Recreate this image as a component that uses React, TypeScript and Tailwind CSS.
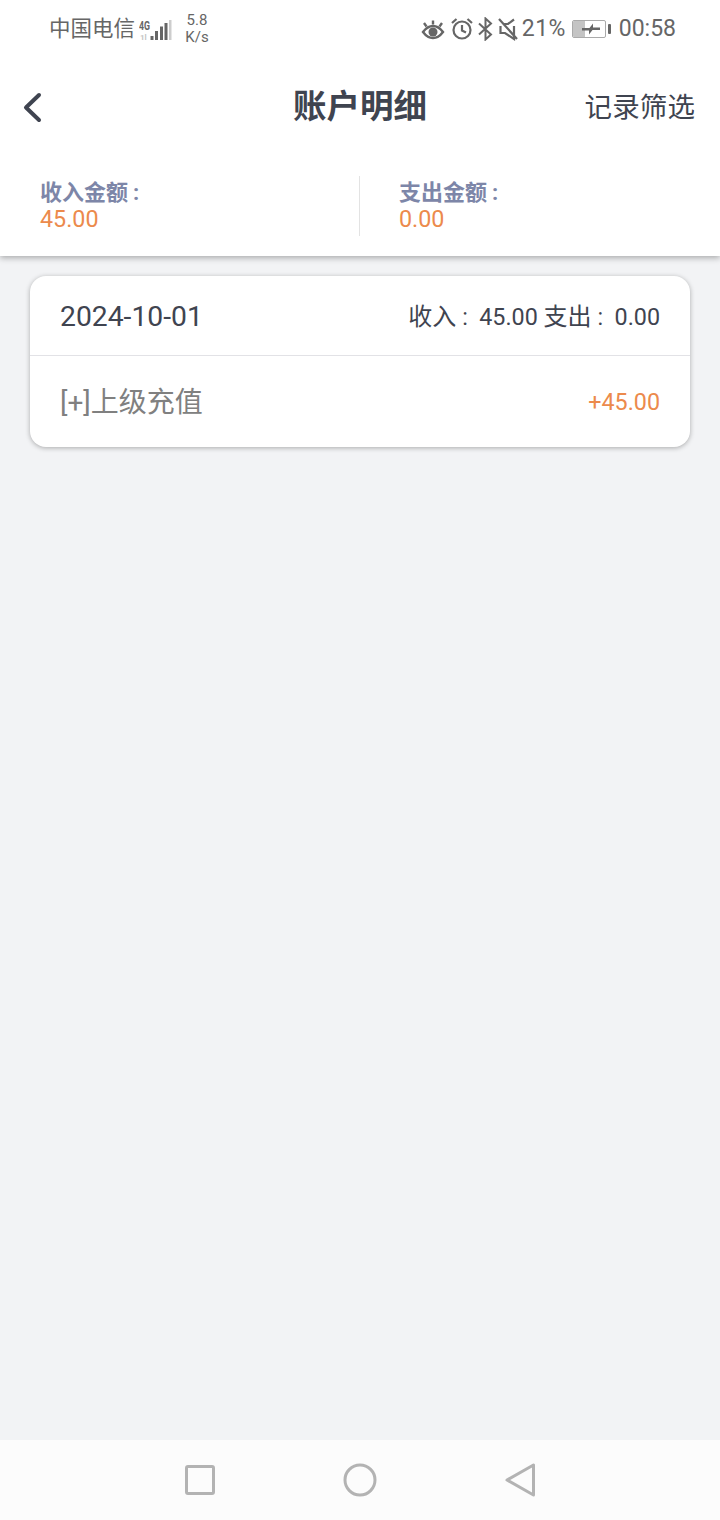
const font = "font-['Roboto','Noto_Sans_CJK_SC',sans-serif]";

function StatusBar() {
  return (
    <div className="h-[58px] flex items-center justify-between pl-[49px] pr-[44px] text-[#666666]">
      <div className="flex items-center">
        <span className="text-[21.500px] leading-[28px] w-[90px]">中国电信</span>
        <svg width="34" height="24" viewBox="0 0 34 24" className="mt-[3px]">
          <text x="0" y="11" fontSize="13" fontWeight="700" fill="#666" fontFamily="Roboto" textLength="11" lengthAdjust="spacingAndGlyphs">4G</text>
          <text x="1" y="21" fontSize="8" fontWeight="700" fill="#c4c4c4" fontFamily="Roboto">1l</text>
          <rect x="11.500" y="17" width="3" height="4" fill="#666" />
          <rect x="16" y="12" width="3" height="9" fill="#666" />
          <rect x="21" y="7.500" width="3" height="13.500" fill="#666" />
          <rect x="25.500" y="4" width="3" height="17" fill="#666" />
          <rect x="30" y="1" width="2.500" height="20" fill="#cdcdcd" />
        </svg>
        <div className="ml-[12px] w-[24px] flex flex-col items-center text-[15px] leading-[17px] mt-[-1px]">
          <span>5.8</span>
          <span>K/s</span>
        </div>
      </div>
      <div className="flex items-center">
        <svg width="24" height="24" viewBox="0 0 24 24" fill="none" stroke="#666" strokeWidth="2.400">
          <path d="M2 15c3-4 6.500-6 10-6s7 2 10 6c-3 4-6.500 6-10 6s-7-2-10-6z" />
          <circle cx="12" cy="15" r="4.500" fill="#666" stroke="none" />
          <path d="M3 6l2.500 3.500M12 3.500v4M21 6l-2.500 3.500" />
        </svg>
        <svg width="24" height="24" viewBox="0 0 24 24" fill="none" stroke="#666" strokeWidth="2.200" className="ml-[5px]">
          <circle cx="12" cy="13" r="8.500" />
          <path d="M12 8v5.500l4 2M2 6l4.500-4M22 6l-4.500-4" />
        </svg>
        <svg width="16" height="24" viewBox="0 0 16 24" fill="none" stroke="#666" strokeWidth="2" className="ml-[3px]">
          <path d="M2 6.500l12 11-5.500 5V1.500l5.500 5-12 11" />
        </svg>
        <svg width="22" height="24" viewBox="0 0 22 24" fill="none" stroke="#666" strokeWidth="2.200" className="ml-[4px]">
          <path d="M2 2l18 20M17 2.500L11 7H7M3.500 9v7h4.500l9 6V9" />
        </svg>
        <span className="text-[23px] leading-[28px] ml-[3px] tracking-[0.4px]">21%</span>
        <div className="ml-[6px] w-[34px] h-[18px] border border-[#aaaaaa] rounded-[2px] bg-white relative overflow-hidden">
          <div className="h-full w-[12px] bg-[#c4c4c4]"></div>
          <svg width="20" height="12" viewBox="0 0 20 12" className="absolute left-[9px] top-[2px]">
            <path d="M0 5h7.500l3.500-4.500v4h7v2.500h-7.500l-3.500 4.500V7.500H0z" fill="#666" />
          </svg>
        </div>
        <div className="ml-[2px] w-[3px] h-[10px] bg-[#666666] rounded-[1px]"></div>
        <span className="text-[23px] leading-[28px] ml-[8px]">00:58</span>
      </div>
    </div>
  );
}

function SummaryCell({ label, value, className }: { label: string; value: string; className: string }) {
  return (
    <div className={className}>
      <div className="text-[22px] leading-[27px] font-bold text-[#7d86a8]">
        {label}
        <span className="ml-[5px]">:</span>
      </div>
      <div className="text-[23.300px] leading-[27px] text-[#ec8a4c]">{value}</div>
    </div>
  );
}

export default function App() {
  return (
    <div className={`w-[720px] h-[1520px] bg-[#f2f3f5] flex flex-col ${font}`}>
      <div className="bg-white h-[256px] flex flex-col shadow-[0_2px_6px_rgba(0,0,0,0.3)] z-10">
        <StatusBar />
        <div className="h-[98px] flex items-center justify-between pl-[22px] pr-[25px] relative">
          <svg width="22" height="32" viewBox="0 0 22 32" fill="none" stroke="#3f4450" strokeWidth="4" strokeLinecap="round" strokeLinejoin="round">
            <path d="M17 4L4 16.500 17 29" />
          </svg>
          <span className="absolute left-0 right-0 text-center text-[33.500px] leading-[40px] font-bold text-[#3f4450]">账户明细</span>
          <span className="text-[27.500px] leading-[34px] text-[#3f4450] mt-[2px] tracking-[0.1px]">记录筛选</span>
        </div>
        <div className="flex items-center mt-[20px] h-[60px]">
          <SummaryCell label="收入金额" value="45.00" className="w-[359px] pl-[40px]" />
          <div className="w-px h-[60px] bg-[#e3e3e3]"></div>
          <SummaryCell label="支出金额" value="0.00" className="pl-[39px]" />
        </div>
      </div>

      <div className="mx-[30px] mt-[20px] h-[171px] bg-white rounded-[16px] shadow-[0_1px_5px_rgba(0,0,0,0.3)]">
        <div className="h-[80px] flex items-center justify-between px-[30px] border-b border-[#e2e2e6] text-[#3f4450]">
          <span className="text-[28.300px] leading-[36px] mt-[3px]">2024-10-01</span>
          <span className="text-[23.300px] leading-[30px] mt-[2px]">
            <span className="text-[24px]">收入</span>
            <span className="inline-block w-[23px] pl-[6px]">:</span>45.00 <span className="text-[24px]">支出</span>
            <span className="inline-block w-[23px] pl-[6px]">:</span>0.00
          </span>
        </div>
        <div className="h-[91px] flex items-center justify-between px-[30px]">
          <span className="text-[28px] leading-[36px] text-[#808080] mt-[2px]">[+]上级充值</span>
          <span className="text-[23.300px] leading-[30px] text-[#ec8a4c]">+45.00</span>
        </div>
      </div>

      <div className="mt-auto h-[80px] bg-[#fcfcfc] flex items-center justify-center gap-[100px]">
        <svg width="60" height="40" viewBox="0 0 60 40" fill="none" stroke="#b3b3b3" strokeWidth="3" strokeLinejoin="round">
          <rect x="16.500" y="6.500" width="27" height="27" rx="1.500" />
        </svg>
        <svg width="60" height="40" viewBox="0 0 60 40" fill="none" stroke="#b3b3b3" strokeWidth="3">
          <circle cx="30" cy="20" r="15" />
        </svg>
        <svg width="60" height="40" viewBox="0 0 60 40" fill="none" stroke="#b3b3b3" strokeWidth="3" strokeLinejoin="round">
          <path d="M17 20L43.500 5V35z" />
        </svg>
      </div>
    </div>
  );
}
